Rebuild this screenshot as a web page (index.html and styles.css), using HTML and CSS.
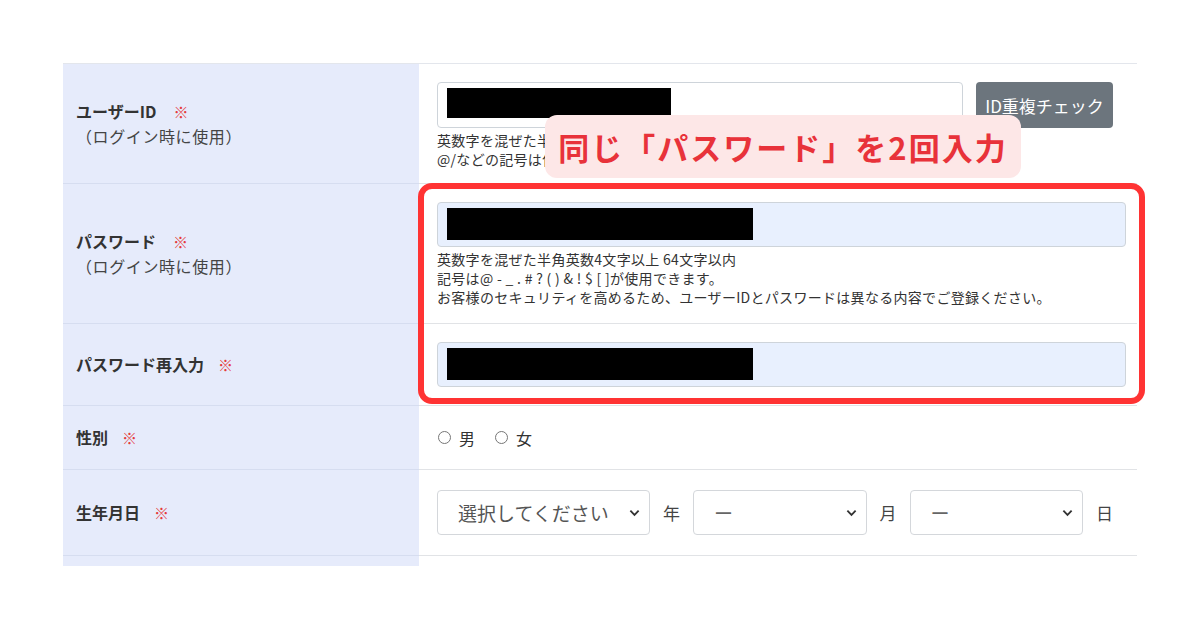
FILE: index.html
```html
<!DOCTYPE html>
<html lang="ja">
<head>
    <meta charset="UTF-8">
    <meta name="viewport" content="width=device-width, initial-scale=1.0">
    <title>会員登録</title>
    <link rel="stylesheet" href="styles.css">
</head>
<body>
    <div class="page">
        <div class="form-table">
            <!-- ユーザーID -->
            <div class="row row-id">
                <div class="label">
                    <div><span class="label-text">ユーザーID</span><span class="req req-wide">※</span></div>
                    <div class="label-sub">（ログイン時に使用）</div>
                </div>
                <div class="cell">
                    <div class="field-line">
                        <div class="field field-id"><span class="mask mask-short"></span></div>
                        <button class="check-btn">ID重複チェック</button>
                    </div>
                    <p class="help">英数字を混ぜた半角英数4文字以上 64文字以内<br>@/などの記号は使用できません。</p>
                </div>
            </div>

            <!-- パスワード -->
            <div class="row row-pass">
                <div class="label">
                    <div><span class="label-text">パスワード</span><span class="req req-wide">※</span></div>
                    <div class="label-sub">（ログイン時に使用）</div>
                </div>
                <div class="cell">
                    <div class="field field-filled"><span class="mask"></span></div>
                    <p class="help">英数字を混ぜた半角英数4文字以上 64文字以内<br>記号は@ - _ . # ? ( ) &amp; ! $ [ ]が使用できます。<br>お客様のセキュリティを高めるため、ユーザーIDとパスワードは異なる内容でご登録ください。</p>
                </div>
            </div>

            <!-- パスワード再入力 -->
            <div class="row row-repass">
                <div class="label">
                    <div><span class="label-text">パスワード再入力</span><span class="req">※</span></div>
                </div>
                <div class="cell">
                    <div class="field field-filled"><span class="mask"></span></div>
                </div>
            </div>

            <!-- 性別 -->
            <div class="row row-sex">
                <div class="label">
                    <div><span class="label-text">性別</span><span class="req">※</span></div>
                </div>
                <div class="cell cell-inline">
                    <label class="radio"><span class="radio-dot"></span>男</label>
                    <label class="radio"><span class="radio-dot"></span>女</label>
                </div>
            </div>

            <!-- 生年月日 -->
            <div class="row row-birth">
                <div class="label">
                    <div><span class="label-text">生年月日</span><span class="req">※</span></div>
                </div>
                <div class="cell cell-inline">
                    <div class="select select-year">
                        <span>選択してください</span>
                        <svg class="chevron" viewBox="0 0 12 8" width="11" height="8"><path d="M1.5 1.5 L6 6 L10.5 1.5" fill="none" stroke="#333" stroke-width="2"/></svg>
                    </div>
                    <span class="unit">年</span>
                    <div class="select select-day">
                        <span class="dash">ー</span>
                        <svg class="chevron" viewBox="0 0 12 8" width="11" height="8"><path d="M1.5 1.5 L6 6 L10.5 1.5" fill="none" stroke="#333" stroke-width="2"/></svg>
                    </div>
                    <span class="unit">月</span>
                    <div class="select select-day">
                        <span class="dash">ー</span>
                        <svg class="chevron" viewBox="0 0 12 8" width="11" height="8"><path d="M1.5 1.5 L6 6 L10.5 1.5" fill="none" stroke="#333" stroke-width="2"/></svg>
                    </div>
                    <span class="unit">日</span>
                </div>
            </div>

            <div class="row row-next">
                <div class="label"></div>
                <div class="cell"></div>
            </div>
        </div>

        <!-- annotation overlays -->
        <div class="highlight-box"></div>
        <div class="callout">同じ「パスワード」を2回入力</div>
    </div>
</body>
</html>
```

FILE: styles.css
```css
* {
    margin: 0;
    padding: 0;
    box-sizing: border-box;
}

body {
    background: #ffffff;
    font-family: "Noto Sans CJK JP", "Noto Sans", sans-serif;
    color: #333333;
}

.page {
    position: relative;
    width: 1200px;
    height: 630px;
    padding: 63px 63px 0;
}

.form-table {
    width: 1074px;
    height: 503px;
    overflow: hidden;
    border-top: 1px solid #e3e6ec;
}

.row {
    display: grid;
    grid-template-columns: 356px 718px;
}

.row-id { height: 120px; }
.row-pass { height: 140px; }
.row-repass { height: 82px; }
.row-sex { height: 64px; }
.row-birth { height: 86px; }
.row-next { height: 40px; }

.label {
    background: #e6ebfb;
    border-bottom: 1px solid #d6ddf0;
    padding-left: 13px;
    display: flex;
    flex-direction: column;
    justify-content: center;
    font-size: 16px;
    line-height: 25px;
}

.label-text {
    font-weight: 700;
    color: #333333;
}

.label-sub {
    color: #444444;
    letter-spacing: 0.6px;
}

.req {
    color: #e53a3a;
    margin-left: 14px;
    font-size: 15px;
}

.req-wide {
    margin-left: 17px;
}

.cell {
    border-bottom: 1px solid #e1e3e6;
    padding: 18px 11px 0 18px;
}

.cell-inline {
    display: flex;
    align-items: center;
    padding-top: 0;
}

.field-line {
    display: flex;
    gap: 13px;
}

.field {
    height: 46px;
    border: 1px solid #ced4da;
    border-radius: 4px;
    background: #ffffff;
    padding: 5px 9px;
}

.field-id {
    width: 526px;
}

.field-filled {
    background: #e8f0fe;
    height: 45px;
}

.mask {
    display: block;
    width: 306px;
    height: 32px;
    background: #000000;
}

.mask-short {
    width: 224px;
    height: 30px;
}

.check-btn {
    width: 137px;
    height: 46px;
    border: none;
    border-radius: 4px;
    background: #6c757d;
    color: #ffffff;
    font-family: inherit;
    font-size: 17px;
}

.help {
    font-size: 14px;
    line-height: 19px;
    letter-spacing: 0.3px;
    color: #333333;
    margin-top: 3px;
}

.radio {
    display: flex;
    align-items: center;
    font-size: 16px;
    color: #333333;
    margin-right: 19px;
    padding-left: 1px;
}

.radio-dot {
    width: 13px;
    height: 13px;
    border: 1px solid #767676;
    border-radius: 50%;
    margin-right: 8px;
}

.select {
    height: 45px;
    border: 1px solid #d4d7db;
    border-radius: 4px;
    display: flex;
    align-items: center;
    justify-content: space-between;
    padding: 0 9px 0 20px;
    font-size: 19px;
    color: #555555;
}

.dash {
    color: #666666;
}

.select-year {
    width: 215px;
}

.select-day {
    width: 175px;
}

.chevron {
    flex-shrink: 0;
}

.unit {
    font-size: 17px;
    color: #444444;
    margin: 0 13px;
}

.highlight-box {
    position: absolute;
    left: 418px;
    top: 183px;
    width: 727px;
    height: 221px;
    border: 6px solid #ff3333;
    border-radius: 14px;
}

.callout {
    position: absolute;
    left: 545px;
    top: 115px;
    width: 476px;
    height: 63px;
    background: #fde7e7;
    border-radius: 12px;
    color: #e8323a;
    font-size: 31px;
    font-weight: 700;
    letter-spacing: 2px;
    display: flex;
    align-items: center;
    justify-content: center;
}
```
